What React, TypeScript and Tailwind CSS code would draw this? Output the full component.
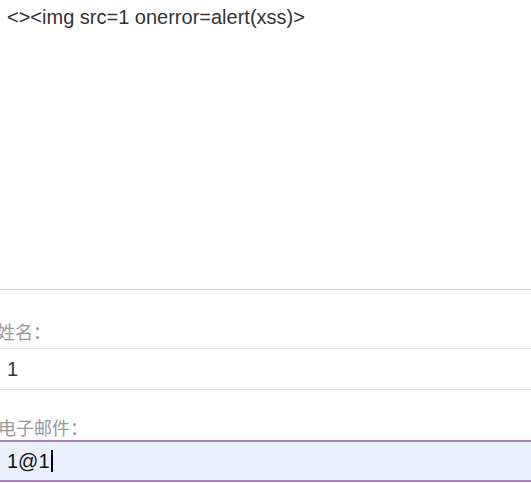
import React from "react";

export default function App() {
  return (
    <div className="w-[531px] h-[483px] overflow-hidden bg-white font-['Liberation_Sans','Noto_Sans_CJK_SC',sans-serif]">
      {/* comment output area */}
      <div className="h-[290px] border-b border-[#d6d6d6] px-[7px] pt-[4px] text-[20px] leading-[26px] text-[#333]">
        {"<><img src=1 onerror=alert(xss)>"}
      </div>

      {/* form */}
      <div className="pt-[29px]">
        <label className="block -ml-[3px] h-[24px] text-[18px] leading-[24px] text-[#999] font-['Noto_Sans_CJK_SC',sans-serif]">姓名：</label>
        <div className="mt-[5px] h-[42px] border-y border-[#e3e3e3] px-[7px] flex items-center text-[20px] text-[#333]">
          1
        </div>

        <label className="block mt-[25px] -ml-[2px] h-[24px] text-[18px] leading-[24px] text-[#999] font-['Noto_Sans_CJK_SC',sans-serif]">电子邮件：</label>
        <div className="mt-[1px] h-[42px] border-y-2 border-[#b07cc6] bg-[#e8f0fe] px-[7px] flex items-center text-[20px] text-[#111]">
          1@1<span className="inline-block w-[2px] h-[22px] bg-black ml-[1px]" />
        </div>
      </div>
    </div>
  );
}
